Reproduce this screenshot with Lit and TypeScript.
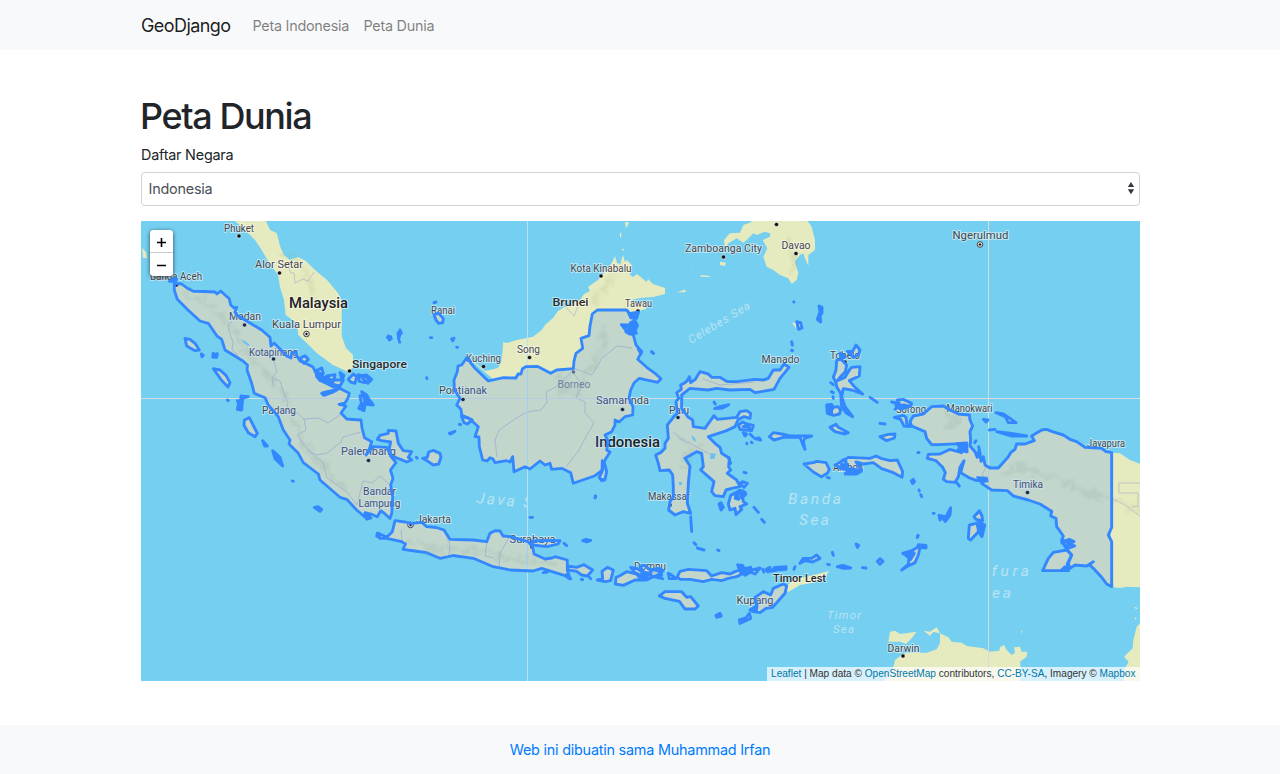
import { LitElement, html, svg, css } from "lit";
import { customElement, property } from "lit/decorators.js";

/** A sheet holds rings drawn at three units per map pixel from its own origin. */
interface Sheet {
  x: number;
  y: number;
  rings: string[];
}

interface Label {
  t: string;
  x: number;
  y: number;
  w: number;
  k?: string;
}

const MAINLAND: string[] = [
  // Sumatra
  "174.3,283.3 181.7,284 187,288 193.3,291.3 204,291.5 215,292 217,294 220.7,291 225,295 229.3,298.7 230.7,305 234,308 236.7,307.3 235,312 236.7,315 243.3,319 250,323 261.7,330 270,337.3 271,346 274,343 280,349 286.7,356 291,358 291.7,352.7 296,352 297,356 300,361 307,364 313,367 316.7,375 320,380 333,386.7 341,389 349.3,393.3 348,398 345,403 339,404.3 346,406 341,413 346.7,419 353,419.5 361,420 362,428 364.5,437.7 371.7,441.7 369,450 366,455 373,446.7 386.7,447.3 391.7,457.3 396,462.7 390.5,470 393,478.3 390.7,485 392.7,496.7 391.7,513.3 390,518.5 384,513 380.7,510.7 377.3,516.7 371,514 365,512.7 371,518 367.3,519 356.7,510 346.7,499.3 340,497.3 320,480 318.3,474 303.3,462.7 298.3,453.3 289,444 290,440 283.3,430 278.3,416.7 268.3,405 265,397.7 254.3,393.3 251.7,383.3 247,370 247.5,365 243,361 225,350 221.7,339.3 217,336 208.3,323.3 200,321 188,310 177.3,299.3 174.3,290",
  // Borneo
  "466.7,357.7 475,368.3 488.3,381 503.3,377.7 516,378 518,374 521,374 522.3,369 525.7,366.7 537.3,366.3 550.7,373.3 556.7,370 573.3,368.7 574,361 576,353.3 582.7,348.3 581,338.3 589,335.7 590,326 592.3,314 597.3,310 626.7,310 630,314 638.3,312.7 634,320 637.3,325 621.7,325 626.7,331.7 633.3,335 636,345 641.7,351.7 637.7,359.3 646.7,367.3 655,373.3 661,378.7 657.7,382.3 639.3,378.3 634,383 630.7,390 629,398.3 633,407 632.7,415 625,416.7 619,422 615,420 615,425 611.7,431.7 605,435 608.3,441.7 606.7,450 610,452 605,460 602.7,470 595,475.7 573.3,483.3 570.7,472.7 561.7,468.3 551.7,469.3 550,463.3 545,465 540,461 535,465 530,469 525,466.7 514,471.7 512.7,456.7 510,462 506.7,460.7 495,462.7 493,459 490,457.7 487,461 482.7,460 479.3,446.7 479,437 475,436.7 478.3,426.7 470,419.3 461.7,415 461,409.3 456.7,405 460,398.3 454.3,390 454,380 457.3,371.7 458,366 461.7,365",
  // Java
  "378.3,533.3 380,538.3 387,538.3 401.7,541.7 405.5,544 403,549.3 415,551 426.7,552.7 440,558.3 448.3,556.7 453,555.5 473.3,558.3 493.3,566.7 510,570 533,571 541.7,568.3 565,575.7 570,579 567.3,570 567.3,560 555,556.7 552,558 545,559 534,554 532.7,546.7 528,541.7 510,536.7 503,536 500,531 495,530.7 490,533.3 486.7,541.7 473.3,540 450,539.3 444,530 436,527.5 426.7,526.7 421.7,522.3 411.7,523.3 405,522 395,520.7 392.3,531.7 386.7,537.3",
  // Madura
  "533,545 532,541 545,540.5 560,540.7 558,544 546.7,546.7",
];

const ISLANDS: Sheet[] = [
  {
    x: 140, y: 220,
    rings: [
      "103,174 110,178 106,184 88,184", "135,355 150,358 165,370 178,390 165,392 140,378",
      "184,402 190,406 186,410", "220,400 226,404 232,401 230,412 218,411",
      "220,446 240,450 258,466 270,488 264,501 244,480", "480,415 495,407 505,418 492,430",
      "529,452 545,444 550,460 540,470", "742,352 752,350 750,356", "774,338 780,340 776,358",
    ],
  },
  {
    x: 140, y: 370,
    rings: [
      "530,5 545,12 548,22 565,20 568,35 540,32 530,20", "560,18 585,14 582,30 610,30 600,48 572,42",
      "600,8 612,16 606,28", "625,28 640,12 650,20 645,40 632,36", "655,14 668,18 690,25 675,38 658,34",
      "545,70 552,76 580,66 600,54 575,62 550,68", "665,65 680,75 688,90 700,105 683,98 675,105 672,122 656,115 662,104 676,98",
      "303,78 325,80 308,84 305,120 292,118 300,112 292,92 302,95", "262,90 265,92",
      "313,150 328,143 352,190 345,200 325,188 312,166", "368,212 382,228 374,228", "398,242 420,262 428,288 405,266",
      "457,333 460,334", "523,412 534,410 545,418 540,424",
      "712,208 720,196 745,190 745,181 768,183 775,220 790,242 815,245 805,262 815,270 800,276 782,268 752,258 748,235 752,216 725,212",
      "829,262 832,265", "848,265 862,262 866,246 880,241 900,250 903,262 896,282 880,285 864,274",
    ],
  },
  {
    x: 360, y: 290,
    rings: [
      "222,38 228,36", "222,74 236,70 250,86 248,98 236,100 228,90", "85,138 94,146 88,150", "120,120 124,130 116,135",
      "118,154 119,157", "211,143 215,143", "275,147 282,145 278,152", "290,172 293,172", "200,263 201,266",
      "268,430 285,424 272,432", "298,403 302,404", "304,378 325,384 337,390 322,402 312,398", "727,512 735,525 740,545 735,568 725,572 718,562 726,545",
      "875,185 880,190", "707,619 705,624", "0,258 20,255 35,268 24,280", "0,318 12,315 22,328 36,345 15,342 8,358",
    ],
  },
  {
    x: 360, y: 480,
    rings: [
      "510,112 518,112", "612,190 620,197", "668,182 678,178 692,181 680,186", "550,278 562,276", "52,160 50,168 60,174",
      "622,258 650,262 672,254 698,270 682,288 665,285 650,274 625,270", "688,292 692,296", "664,298 668,299", "618,284 632,296",
      "712,300 728,296 726,274 742,262 760,270 752,302 735,305",
      "768,292 778,288 800,275 830,282 838,292 855,300 825,300 790,316 766,312",
      "812,262 830,265 846,275 868,280 880,268 900,275 905,285 878,290 866,284 845,288 825,278", "706,48 706,52", "724,-2 734,0",
    ],
  },
  {
    x: 640, y: 330,
    rings: [
      "116,205 110,188 124,178 122,165 135,158 142,152 148,140 152,158 166,148 172,138 180,125 205,132 215,142 240,142 262,155 290,155 345,148 370,150 385,145 400,120 420,120 432,102 447,112 420,145 402,178 380,182 345,188 330,178 270,180 230,175 205,180 150,175 125,195 125,235 145,262 158,270 160,290 195,295 222,257 232,268 290,262 300,245 320,242 332,250 330,265 312,260 295,268 285,290 260,302 235,310 205,320 225,340 240,352 245,370 268,385 266,410 272,420 262,430 290,450 300,470 275,475 258,480 250,500 225,497 215,485 222,455 205,440 182,420 190,410 185,370 170,365 135,385 150,408 145,460 142,520 152,550 130,545 105,555 86,540 90,515 100,500 100,470 98,435 88,420 60,422 55,400 47,375 62,368 75,355 75,340 85,325 82,285 100,262 112,250 108,215",
      "222,216 226,222", "224,236 240,230 266,224 248,234", "295,285 308,276 320,282 340,286 335,302 315,300 300,298", "310,308 320,312 315,318", "330,312 340,322",
      "345,326 358,324 362,330", "320,340 321,341", "334,336 336,338", "388,320 400,308 425,312 450,318 515,318 495,324 490,335 495,358 487,340 480,322 430,322 402,330",
      "562,442 568,444",
      "265,522 272,496 288,488 286,505 296,508 292,485 308,482 318,492 308,502 310,515 320,522 300,530 305,538 288,554 285,535 270,540",
      "300,460 308,455 322,460 312,472", "312,427 318,429", "237,522 243,518 250,532 243,540", "342,532 355,547",
      "365,568 373,577", "455,35 457,45", "456,62 457,62", "35,65 40,70", "152,560 155,605", "-5,58 5,64 3,72", "265,382 272,400",
    ],
  },
  {
    x: 640, y: 500,
    rings: [
      "0,198 15,196 30,210 56,205 70,212 52,226 68,236 40,230 20,240 4,232 12,220", "85,220 96,226 108,236 88,236",
      "112,230 120,214 145,208 200,212 215,228 245,218 270,222 285,215 300,210 318,215 290,230 265,235 245,242 215,238 190,245 150,238 120,238",
      "293,195 308,196 312,206 332,202 330,212 360,204 345,222 332,216 315,226 302,212", "368,208 372,216", "378,208 390,202 384,216", "392,214 405,202 438,200 438,208 410,210",
      "465,200 462,208", "480,190 490,175 515,175 530,165 540,175 518,186 495,182", "577,157 580,166", "563,193 568,194", "648,132 656,136 652,142",
      "592,200 608,196 632,204 610,205", "667,203 678,204", "720,176 729,184 720,193 712,184",
      "785,210 805,192 808,170 788,160 815,152 833,142 835,134 858,136 858,144 840,142 835,165 825,188 808,196", "834,106 832,112", "880,40 882,40", "897,46 900,60",
      "58,288 75,275 125,275 140,292 152,290 175,318 165,327 135,327 118,304 75,295", "228,346 240,340 244,348 230,352",
      "330,330 350,318 345,292 370,275 392,285 400,265 430,252 440,258 435,280 398,322 378,325 360,338 340,335", "298,360 318,354 328,340 332,355 300,370",
      "162,128 168,134", "172,144 192,150", "233,150 237,152",
    ],
  },
  {
    x: 780, y: 290,
    rings: [
      "160,262 168,240 170,212 182,207 200,225 196,245 180,262 172,272 195,262 208,240 215,232 240,230 238,258 208,272 225,292 248,312 215,300 190,296 185,320 195,350 218,380 200,370 185,350 182,310 170,290 168,278",
      "202,184 218,184 228,165 240,180 235,195 220,202", "180,190 196,200 184,208", "152,278 160,284", "154,305 160,308", "159,320 160,325",
      "140,345 155,343 160,352 174,350 182,360 178,372 160,376 142,370", "152,362 158,356", "150,412 168,403 175,412 205,428 195,432 165,425", "270,322 292,337", "300,400 315,402",
      "300,440 325,433 345,432 343,444 320,452", "72,522 100,518 110,514 138,518 148,538 142,550 124,560 100,546",
      "165,525 182,515 192,508 202,530 196,508 205,502 270,505 288,498 305,506 330,512 352,510 368,545 366,562 340,548 305,536 280,518 250,522 228,516 245,542 230,552 195,552 210,540 182,534",
      "414,488 417,488", "400,568 401,570", "117,48 126,52 126,68 120,78 122,96 112,88 120,66", "41,35 42,36", "50,95 62,98 66,114 56,118", "35,181 37,182",
      "335,336 358,340 352,330 370,328 395,340 392,348 362,348 345,358 360,346", "343,382 370,376 378,382 380,400 390,410 372,408 362,388",
    ],
  },
  {
    x: 900, y: 390,
    rings: [
      "30,95 40,78 70,72 95,50 130,48 150,60 175,72 208,75 210,90 218,108 210,125 212,150 210,168 225,185 232,202 238,180 243,214 250,200 255,225 270,234 295,234 325,200 332,188 345,178 350,162 375,162 403,152 395,138 425,120 440,118 455,124 490,135 510,148 530,155 555,172 605,175 618,185 635,188 635,412 625,435 635,455 635,590 620,582 605,562 580,535 568,524 580,515 560,528 525,525 510,535 505,520 515,495 500,478 485,452 490,438 470,410 468,385 452,378 455,364 420,342 385,330 340,318 322,302 275,300 245,280 258,268 230,272 205,262 182,248 192,212 180,232 175,260 165,277 140,275 130,268 136,248 128,232 108,212 82,205 85,193 120,192 150,178 185,188 175,178 200,178 200,160 115,164 95,164 80,145 75,125 35,108",
      "428,542 445,505 460,487 500,480 515,495 502,522 505,542", "485,540 495,530 505,542", "288,68 310,72 328,84 348,98 325,98 316,80", "250,88 264,90 258,96", "290,125 335,130 380,138 335,138", "268,120 285,118",
      "228,152 224,158", "236,170 240,190", "238,362 246,378 248,392 228,388 222,380", "222,402 238,396 254,405 246,440 235,425 212,450 205,445 208,405", "232,405 235,420",
      "152,353 150,375 136,394 120,378 138,380", "100,370 102,370", "34,272 44,274 38,281", "57,300 58,303", "62,314 65,320", "54,437 52,442", "54,188 56,188",
      "485,458 508,448 522,455 505,462 524,468 508,474", "170,278 178,288",
    ],
  },
];

/** Clusters so dense that their outlines merge into one patch. */
const CLUSTERS: Sheet[] = [
  { x: 360, y: 290, rings: ["805,70 836,66 830,86 812,84", "783,104 806,106 812,96 826,92 833,108 826,122 830,130 808,133 797,126 806,116"] },
  { x: 780, y: 290, rings: ["347,348 372,344 388,350 364,358", "196,550 212,534 226,538 244,545 226,552", "142,350 154,350 156,370 144,370", "185,520 198,528 200,540 180,534", "205,184 216,186 212,194"] },
  { x: 640, y: 500, rings: ["293,194 312,204 338,208 330,218 302,220", "790,160 815,152 824,160 812,180", "0,225 12,216 24,232 5,238", "335,326 352,316 350,332"] },
  { x: 640, y: 330, rings: ["298,480 316,486 304,505", "308,290 322,284 330,294"] },
  { x: 900, y: 390, rings: ["122,376 138,384 150,362 146,382 136,394", "488,452 510,450 505,460", "170,160 200,158 202,186 186,184", "232,262 260,264 262,274 240,274", "238,404 250,406 244,436 236,424"] },
  { x: 140, y: 370, rings: ["530,14 548,22 582,30 575,46 545,34", "670,72 694,96 680,98", "296,96 306,92 303,118 292,114", "674,430 690,436 680,448", "404,250 418,264 420,276 408,266"] },
];

const NEIGHBOURS: string[] = [
  // Malay peninsula
  "235,221 245,230 255,240 261.7,250 268,261 278,275 280,287 284,300 285.7,315 296.7,323 298.3,335 306.7,343 316.7,353 333,365 348.3,372 353,367 353,355 346,348 341.7,336 341.7,300 338,293 327,280 315,270 306,261 298,257 290,260 284,255 280,246 276.7,233 270,230 266,221",
  "142,248 146,252 147,258 143,258",
  // Northern Borneo
  "467,357 476.7,364 485,371 498,368 501.7,361 503.3,342 507,343 516.7,340 533,336.7 541.7,330 545,325 553,318 558,311 566,306 580,300 584,294 590,291 588,287 598,280 608,268 611.7,263 615,256 617,263 620,264 623,255 625,262 627,260 631.7,265 630,275 633,277 637,274 646.7,282 648,279 653,284 665,288 665,294 653,297 640,298 632,300 636,303 646,303 646,309 638,311 632,332 560,385 500,385",
];

const ABROAD: Sheet[] = [
  {
    x: 540, y: 220,
    rings: [
      "555,85 552,60 570,40 600,38 610,15 630,8 640,0 800,0 815,20 825,60 825,90 805,105 805,138 795,115 790,100 780,105 765,125 775,160 770,180 755,192 745,175 720,165 700,150 680,140 670,110 682,85 668,60 690,50 690,40 675,35 650,45 640,40 620,60 610,68 590,55 565,70",
      "540,125 558,128 555,138 540,135", "480,165 510,168 508,171 484,170", "412,218 435,208 438,216", "255,5 268,8 258,25", "240,38 244,38 243,52 240,52", "245,85 252,88 250,94", "756,308 768,308 768,325", "458,146 461,148 458,150",
    ],
  },
  { x: 640, y: 500, rings: ["440,272 442,255 465,238 500,230 568,213 555,230 520,248 480,255 445,276"] },
  { x: 900, y: 390, rings: ["635,188 660,190 690,210 722,222 722,592 680,590 660,594 640,592 632,440"] },
  {
    x: 760, y: 590,
    rings: [
      "400,232 405,210 425,195 440,188 500,188 530,178 540,160 540,130 565,142 575,155 605,158 620,168 670,175 690,185 718,182 720,172 732,165 740,180 755,195 765,188 762,172 780,170 785,185 802,185 800,200 780,215 782,235 780,285 365,285",
      "385,155 390,125 405,122 420,132 470,125 455,145 438,162 420,155", "490,122 510,125 530,112 540,130 520,126 510,137", "784,122 788,122 782,132",
      "1142,98 1130,110 1120,150 1118,175 1092,200 1106,215 1095,235 1090,285 1142,285", "1124,82 1130,84 1126,90", "1122,50 1134,54 1128,58",
    ],
  },
];

const BORDERS = [
  "289,268 291,273 294,273 295,283 303,279 308,281 314,272",
  "232,321 228,325 230,334 233,342 232,350 237,354 238,361", "273,385 272,377 277,372 274,362 275,357",
  "273,378 280,381 284,393 288,403 286,412 297,413 304,419 319,418 328,423 341,414",
  "304,419 306,430 297,435 308,450 316,455 327,453 341,442 343,437 361,432", "308,450 323,463 327,478 347,492 357,505 363,481 372,483 380,476 389,484",
  "573,368 592,375 602,358 617,346 632,348", "573,370 559,385 546,392 547,402 541,410 527,412 518,417 499,430 495,440 497,457",
  "573,372 582,385 576,398 585,402 585,413 594,423 587,435 579,450 566,467",
  "401,530 402,541 405,546", "444,530 450,545 449,556", "487,541 485,556 494,558", "510,536 500,553 499,568",
  "673,432 680,438 693,445 715,457", "703,379 720,385 755,382", "988,463 982,475 989,482", "565,306 574,316 578,306",
  "1140,483 1119,483 1119,493 1138,493 1138,506 1132,507", "1111,498 1125,505 1140,516",
];

const RELIEF = [
  "184,291 196,301 205,302 214,311 224,319 232,330 242,345 256,362 270,380 283,394 290,410 297,430 307,448 320,463 334,480 348,492",
  "407,540 421,546 438,550 455,547 468,550 490,553 511,560 535,562 556,563", "558,376 570,381 562,390 577,392 590,370 605,341 603,325",
  "680,438 693,447 680,466 703,445", "1004,475 1020,465 1032,472 1050,475 1065,482 1085,492 1108,498 1140,510",
  "281,250 299,265 310,280 314,300", "592,303 603,292 613,275 620,265", "945,412 960,420 946,428", "787,240 797,265 787,275",
];

const LABELS: Label[] = [
  { t: "Phuket", x: 224, y: 232, w: 30 }, { t: "Alor Setar", x: 255, y: 268, w: 48 }, { t: "Banda Aceh", x: 150, y: 280, w: 52 },
  { t: "Malaysia", x: 289, y: 307.5, w: 59, k: "lg" }, { t: "Kuala Lumpur", x: 272, y: 328, w: 69, k: "cap" }, { t: "Medan", x: 229, y: 320, w: 32 },
  { t: "Kotapinang", x: 249, y: 355.5, w: 49 }, { t: "Singapore", x: 352, y: 367.5, w: 55, k: "md" }, { t: "Padang", x: 262, y: 414, w: 34 },
  { t: "Palembang", x: 341, y: 455, w: 55 }, { t: "Bandar", x: 363, y: 495, w: 33 }, { t: "Lampung", x: 358.5, y: 506.5, w: 42 },
  { t: "Jakarta", x: 416, y: 522.5, w: 35 }, { t: "Ranai", x: 431, y: 313.5, w: 24 }, { t: "Kuching", x: 466, y: 362, w: 35 },
  { t: "Song", x: 517, y: 353, w: 23 }, { t: "Borneo", x: 557.5, y: 387.5, w: 33, k: "dim" }, { t: "Pontianak", x: 439, y: 394, w: 48 },
  { t: "Samarinda", x: 596, y: 404, w: 53 }, { t: "Indonesia", x: 595, y: 447, w: 65, k: "lg" }, { t: "Brunei", x: 552.5, y: 306, w: 36, k: "md" },
  { t: "Tawau", x: 625, y: 307, w: 27 }, { t: "Kota Kinabalu", x: 570.5, y: 271.5, w: 61 }, { t: "Zamboanga City", x: 685, y: 252, w: 77 },
  { t: "Davao", x: 781.5, y: 248.5, w: 29 }, { t: "Ngerulmud", x: 952.5, y: 239, w: 56 }, { t: "Manado", x: 761.5, y: 363, w: 38 },
  { t: "Tobelo", x: 830, y: 359, w: 30 }, { t: "Palu", x: 669, y: 413.5, w: 20 }, { t: "Makassar", x: 648, y: 500, w: 42 },
  { t: "Surabaya", x: 509.5, y: 543, w: 46 }, { t: "Dompu", x: 634, y: 570, w: 32 }, { t: "Kupang", x: 736.5, y: 603.5, w: 37 },
  { t: "Timor Lest", x: 773, y: 582, w: 53, k: "md" }, { t: "Sorong", x: 896, y: 413, w: 30 }, { t: "Manokwari", x: 946.5, y: 412, w: 46 },
  { t: "Jayapura", x: 1087, y: 447, w: 38 }, { t: "Timika", x: 1013, y: 488, w: 30 }, { t: "Darwin", x: 887.5, y: 652, w: 32 },
  { t: "Ambon", x: 833, y: 471, w: 30 },
];

const TOWNS: number[][] = [
  [239, 236], [279.5, 273], [244.5, 325], [273.5, 359], [349.5, 371], [368.5, 460.5], [483.5, 366.5], [529.5, 357.5], [463, 399.5],
  [622.5, 409.5], [638, 311], [601, 276], [723.5, 257], [796, 253.5], [776.5, 224.5], [678, 417.5], [1027.5, 492.5], [903, 656],
  [176.5, 285], [670, 505], [532, 547], [845, 362], [650, 574.5],
];
const CAPITALS: number[][] = [[306.5, 334], [980, 244.5], [410.5, 525]];

@customElement("country-map")
export class CountryMap extends LitElement {
  static styles = css`
    :host { display: block; position: relative; height: 460px; overflow: hidden; background: #75cff0; letter-spacing: 0; }
    svg { display: block; width: 100%; height: 460px; }
    .land { fill: #e6eabf; }
    .area { fill: #3388ff; fill-opacity: 0.2; }
    .edge { fill: none; stroke: #3388ff; stroke-width: 2.8; stroke-linejoin: round; stroke-linecap: round; }
    .sheet .edge { stroke-width: 8.7; }
    .dense { fill: #3388ff; stroke: #3388ff; stroke-width: 7; stroke-linejoin: round; }
    .grid { stroke-width: 1; fill: none; }
    .meridian { stroke: #b9e2f2; }
    .line { stroke: #d6dbdf; }
    .border { fill: none; stroke: #b9b9c4; stroke-width: 0.8; stroke-linejoin: round; }
    .relief { fill: none; stroke: #8f9c72; stroke-opacity: 0.15; stroke-width: 6; stroke-dasharray: 7 2 3 3 9 1; filter: url(#grain); }
    .lake { fill: #75cff0; }
    .town { fill: #111; stroke: #fff; stroke-opacity: 0.6; stroke-width: 0.8; }
    .ring { fill: #e8e8e8; stroke: #444; stroke-width: 1; }
    text { font-family: Roboto, "Liberation Sans", sans-serif; }
    .label { font-size: 10.3px; fill: #46464c; stroke: #fff; stroke-opacity: 0.5; stroke-width: 2px; stroke-linejoin: round; paint-order: stroke; }
    .md { font-size: 11.8px; font-weight: 500; fill: #2b2b2b; }
    .lg { font-size: 14px; font-weight: 500; fill: #222; }
    .cap { font-size: 11px; }
    .dim { font-size: 10.8px; fill: #85808c; stroke: none; }
    .sea { font-style: italic; fill: #b9e4f4; }
    .s16 { font-size: 15.5px; }
    .s11 { font-size: 11.5px; }
    .zoom { position: absolute; left: 9px; top: 9px; width: 23px; border-radius: 4px; box-shadow: 0 1px 4.5px rgba(0, 0, 0, 0.65); background: #fff; overflow: hidden; }
    .zoom button { display: grid; place-items: center; width: 23px; height: 23px; padding: 1px 0 0; border: 0; background: #fff; }
    .zoom button:first-child { border-bottom: 1px solid #ccc; padding-top: 2px; }
    .zoom button:last-child { padding-top: 2px; }
    .zoom svg { width: 11px; height: 11px; stroke: #000; stroke-width: 1.6; fill: none; }
    .credit { position: absolute; right: 0; bottom: 0; padding: 0 4.5px; height: 14px; font: 10.1px/14px "Liberation Sans", Arial, sans-serif; color: #333; background: rgba(255, 255, 255, 0.7); white-space: nowrap; }
    .credit a { color: #0078a8; text-decoration: none; }
  `;

  private rings(cls: string, sheets: Sheet[]) {
    return sheets.map(
      (s) => svg`<g class="sheet" transform="translate(${s.x} ${s.y}) scale(0.33333)">
        ${s.rings.map((r) => svg`<polygon class=${cls} points=${r} />`)}
      </g>`,
    );
  }

  render() {
    return html`
      <svg viewBox="141 221 999 460" preserveAspectRatio="none">
        <defs>
          <filter id="grain" x="-10%" y="-10%" width="120%" height="120%">
            <feTurbulence type="fractalNoise" baseFrequency="0.12" numOctaves="2" seed="4" result="n" />
            <feDisplacementMap in="SourceGraphic" in2="n" scale="18" xChannelSelector="R" yChannelSelector="G" />
            <feGaussianBlur stdDeviation="0.9" />
          </filter>
          <clipPath id="west"><rect x="141" y="221" width="386" height="460" /></clipPath>
          <clipPath id="east"><rect x="988" y="221" width="152" height="460" /></clipPath>
        </defs>
        ${NEIGHBOURS.map((r) => svg`<polygon class="land" points=${r} />`)}
        ${this.rings("land", ABROAD)}
        ${MAINLAND.map((r) => svg`<polygon class="land" points=${r} />`)}
        ${this.rings("land", ISLANDS)}
        ${RELIEF.map((r) => svg`<polyline class="relief" points=${r} />`)}
        ${BORDERS.map((r) => svg`<polyline class="border" points=${r} />`)}
        <path class="lake" d="M241 339l4 2 5 4-2 1-4-3zM691 435l4 3 1 4-3-2zM711 453l5 1-2 5h-4zM679 482h3v3h-3z" />
        <path class="grid meridian" d="M527.5 221v460" />
        <path class="grid line" d="M988.5 221v460M141 398.5h999" />
        <g clip-path="url(#west)">
          <text class="sea s16" x="476" y="503" textLength="56" transform="rotate(5 476 503)">Java S</text>
        </g>
        <text class="sea s16" x="788" y="503.5" textLength="53">Banda</text>
        <text class="sea s16" x="799" y="524.5" textLength="30">Sea</text>
        <text class="sea s11" x="827" y="619" textLength="34">Timor</text>
        <text class="sea s11" x="833" y="633" textLength="21">Sea</text>
        <text class="sea s11" x="691" y="344" textLength="70" transform="rotate(-31 691 344)">Celebes Sea</text>
        <g clip-path="url(#east)">
          <text class="sea s16" x="980" y="576" textLength="49">afura</text>
          <text class="sea s16" x="980" y="597.5" textLength="31">Sea</text>
        </g>
        ${CAPITALS.map((c) => svg`<circle class="ring" cx=${c[0]} cy=${c[1]} r="2.8" /><circle class="town" cx=${c[0]} cy=${c[1]} r="1.5" />`)}
        ${TOWNS.map((c) => svg`<circle class="town" cx=${c[0]} cy=${c[1]} r="2.1" />`)}
        <circle cx="573.5" cy="372" r="1.7" fill="#6b6470" />
        ${LABELS.map(
          (l) => svg`<text class="label ${l.k ?? ""}" x=${l.x} y=${l.y} textLength=${l.w} lengthAdjust="spacingAndGlyphs">${l.t}</text>`,
        )}
        ${MAINLAND.map((r) => svg`<polygon class="area" points=${r} />`)}
        ${this.rings("area", ISLANDS)}
        ${MAINLAND.map((r) => svg`<polygon class="edge" points=${r} />`)}
        ${this.rings("edge", ISLANDS)}
        ${this.rings("dense", CLUSTERS)}
      </svg>
      <div class="zoom">
        <button aria-label="Zoom in"><svg viewBox="0 0 11 11"><path d="M5.5 1v9M1 5.5h9" /></svg></button>
        <button aria-label="Zoom out"><svg viewBox="0 0 11 11"><path d="M1 5.5h9" /></svg></button>
      </div>
      <div class="credit"><a>Leaflet</a> | Map data © <a>OpenStreetMap</a> contributors, <a>CC-BY-SA</a>, Imagery © <a>Mapbox</a></div>
    `;
  }
}

@customElement("app-root")
export class AppRoot extends LitElement {
  @property() country = "Indonesia";

  static styles = css`
    :host { display: flex; flex-direction: column; height: 774px; background: #fff; color: #212529; font: 14.4px/21.6px Inter, "Liberation Sans", sans-serif; letter-spacing: -0.22px; }
    nav { display: flex; align-items: center; height: 50px; padding: 2px 140px 0 141px; background: #f8f9fa; box-sizing: border-box; }
    .brand { font-size: 18px; letter-spacing: -0.58px; color: rgba(0, 0, 0, 0.9); margin-right: 22px; }
    .link { color: rgba(0, 0, 0, 0.5); margin-right: 14.4px; letter-spacing: -0.26px; }
    main { flex: 1; padding: 45px 140px 0 141px; }
    h1 { margin: 0 0 7px -1px; font-size: 36px; line-height: 43px; font-weight: 500; letter-spacing: -1.4px; }
    label { display: block; height: 22px; line-height: 20px; margin-bottom: 5px; }
    .select { display: flex; align-items: center; justify-content: space-between; height: 34px; padding: 0 4px 0 6.5px; margin-bottom: 15px; border: 1px solid #ced4da; border-radius: 4px; box-sizing: border-box; color: #495057; }
    .select svg { width: 8px; height: 14px; fill: #343a40; margin-bottom: 2px; }
    footer { display: flex; align-items: center; justify-content: center; height: 49px; background: #f8f9fa; color: #007bff; }
  `;

  render() {
    return html`
      <nav>
        <span class="brand">GeoDjango</span>
        <span class="link">Peta Indonesia</span>
        <span class="link">Peta Dunia</span>
      </nav>
      <main>
        <h1>Peta Dunia</h1>
        <label>Daftar Negara</label>
        <div class="select">
          <span>${this.country}</span>
          <svg viewBox="0 0 8 14"><path d="M4 1l3.2 5H.8zM4 13.2L.8 8.2h6.4z" /></svg>
        </div>
        <country-map></country-map>
      </main>
      <footer><span>Web ini dibuatin sama Muhammad Irfan</span></footer>
    `;
  }
}
